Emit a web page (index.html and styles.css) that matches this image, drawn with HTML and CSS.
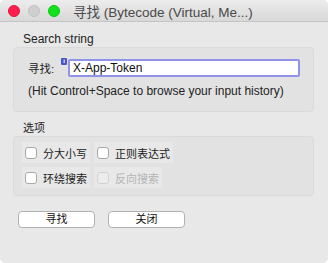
FILE: index.html
```html
<!DOCTYPE html>
<html>
<head>
<meta charset="utf-8">
<link rel="stylesheet" href="styles.css">
</head>
<body>
<div class="window">
  <div class="titlebar">
    <div class="lights">
      <span class="light red"></span>
      <span class="light gray"></span>
      <span class="light green"></span>
    </div>
    <div class="title">寻找 (Bytecode (Virtual, Me...)</div>
  </div>
  <div class="content">
    <div class="group-label latin">Search string</div>
    <div class="group search-group">
      <div class="input-row">
        <span class="field-label">寻找:</span>
        <span class="badge">i</span>
        <div class="input">X-App-Token</div>
      </div>
      <div class="hint">(Hit Control+Space to browse your input history)</div>
    </div>
    <div class="group-label second">选项</div>
    <div class="group options">
      <div class="opt-row">
        <label class="opt"><span class="box"></span>分大小写</label>
        <label class="opt"><span class="box"></span>正则表达式</label>
      </div>
      <div class="opt-row">
        <label class="opt"><span class="box"></span>环绕搜索</label>
        <label class="opt disabled"><span class="box"></span>反向搜索</label>
      </div>
    </div>
    <div class="buttons">
      <button class="btn">寻找</button>
      <button class="btn">关闭</button>
    </div>
  </div>
</div>
</body>
</html>
```

FILE: styles.css
```css
html, body {
  margin: 0;
  padding: 0;
  background: #ffffff;
}
body {
  font-family: "Liberation Sans", "Noto Sans CJK SC", sans-serif;
  font-size: 11px;
  color: #1a1a1a;
}
.window {
  width: 328px;
  height: 263px;
  box-sizing: border-box;
  background: #e8e8e8;
  border-radius: 5px;
  overflow: hidden;
  display: flex;
  flex-direction: column;
}
.titlebar {
  height: 21px;
  flex: none;
  display: flex;
  align-items: center;
  background: linear-gradient(#ececec, #d8d8d8);
  border-bottom: 1px solid #c4c4c4;
}
.lights {
  display: flex;
  gap: 8px;
  padding-left: 8px;
}
.light {
  width: 12px;
  height: 12px;
  border-radius: 50%;
  box-sizing: border-box;
}
.red { background: #fc1e4e; border: 1px solid #e0163f; }
.gray { background: #cfcfcf; border: 1px solid #c0c0c0; }
.green { background: #11e21b; border: 1px solid #0dc414; }
.title {
  margin-left: 13px;
  font-size: 13.5px;
  color: #4a4a4a;
  white-space: nowrap;
}
.content {
  padding: 0 14px 0 13px;
  display: flex;
  flex-direction: column;
}
.group-label {
  margin-top: 11px;
  padding-left: 10px;
  height: 13px;
  line-height: 13px;
  font-size: 11px;
  color: #222;
}
.group-label.latin {
  font-size: 12px;
}
.group-label.second {
  margin-top: 10px;
}
.group {
  margin-top: 1px;
  background: #e2e2e2;
  border: 1px solid #dadada;
  border-radius: 4px;
}
.search-group {
  padding: 11px 13px 0 14px;
  height: 52px;
}
.input-row {
  display: flex;
  align-items: center;
  height: 18px;
}
.field-label {
  width: 33px;
  font-size: 11.5px;
  color: #222;
}
.badge {
  align-self: flex-start;
  width: 6px;
  height: 7px;
  margin-top: -1px;
  margin-right: 1px;
  background: #4a55c9;
  color: #fff;
  font-size: 6px;
  line-height: 7px;
  text-align: center;
  font-weight: bold;
  border-radius: 1px;
}
.input {
  flex: 1;
  height: 18px;
  box-sizing: border-box;
  background: #fff;
  border: 2px solid #8f93ea;
  border-radius: 2px;
  padding-left: 3px;
  font-size: 12px;
  line-height: 14px;
  color: #111;
}
.hint {
  margin-top: 8px;
  height: 13px;
  line-height: 13px;
  font-size: 12px;
  color: #222;
}
.options {
  padding: 5px 0 7px 8px;
  display: flex;
  flex-direction: column;
  gap: 4px;
}
.opt-row {
  display: flex;
  gap: 4px;
}
.opt {
  display: flex;
  align-items: center;
  height: 21px;
  padding: 0 3px;
  background: #e8e8e8;
  font-size: 11px;
  color: #222;
}
.box {
  width: 12px;
  height: 12px;
  box-sizing: border-box;
  background: #fff;
  border: 1px solid #a9a9a9;
  border-radius: 3px;
  margin-right: 6px;
}
.opt.disabled {
  color: #b4b4b4;
}
.opt.disabled .box {
  background: #ececec;
  border-color: #d2d2d2;
}
.buttons {
  display: flex;
  gap: 13px;
  margin-top: 15px;
  padding-left: 5px;
}
.btn {
  width: 77px;
  height: 17px;
  box-sizing: border-box;
  background: #ffffff;
  border: 1px solid #b2b2b2;
  border-radius: 4px;
  font-family: "Liberation Sans", "Noto Sans CJK SC", sans-serif;
  font-size: 11px;
  line-height: 13px;
  padding: 0;
  color: #111;
}
```
